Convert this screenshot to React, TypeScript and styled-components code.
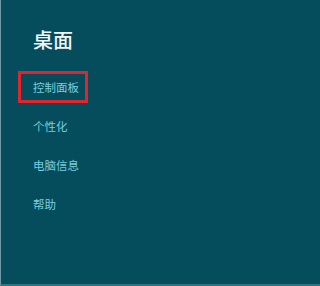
import styled, { createGlobalStyle } from "styled-components";

const GlobalStyle = createGlobalStyle`
    html, body {
        margin: 0;
        padding: 0;
        background: #054c5d;
    }
`;

const StyledPanel = styled.div`
    box-sizing: border-box;
    width: 100%;
    height: 286px;
    padding: 29px 0 0 32px;
    background-color: #054c5d;
    border-left: 1px solid #6f9aa4;
    border-bottom: 2px solid #2f7480;
    font-family: "Noto Sans CJK SC", "Noto Sans", sans-serif;
`;

const StyledTitle = styled.h2`
    margin: 0 0 20px;
    font-size: 20px;
    line-height: 22px;
    font-weight: 500;
    color: #f2f6f7;
`;

const StyledMenu = styled.ul`
    list-style: none;
    margin: 0;
    padding: 0;
    display: flex;
    flex-direction: column;
    align-items: flex-start;
    gap: 7px;
`;

const StyledItem = styled.li<{ $highlighted?: boolean }>`
    box-sizing: border-box;
    width: 70px;
    margin-left: -15px;
    padding: 5px 0 5px 12px;
    border: 3.5px solid ${({ $highlighted }) => ($highlighted ? "#e2242c" : "transparent")};
    font-size: 11.5px;
    line-height: 16px;
    white-space: nowrap;
    color: #79cfdc;
`;

const items = ["控制面板", "个性化", "电脑信息", "帮助"];

const App = () => {
    return (
        <>
            <GlobalStyle />
            <StyledPanel>
                <StyledTitle>桌面</StyledTitle>
                <StyledMenu>
                    {items.map((item, i) => (
                        <StyledItem key={item} $highlighted={i === 0}>
                            {item}
                        </StyledItem>
                    ))}
                </StyledMenu>
            </StyledPanel>
        </>
    );
};

export default App;
